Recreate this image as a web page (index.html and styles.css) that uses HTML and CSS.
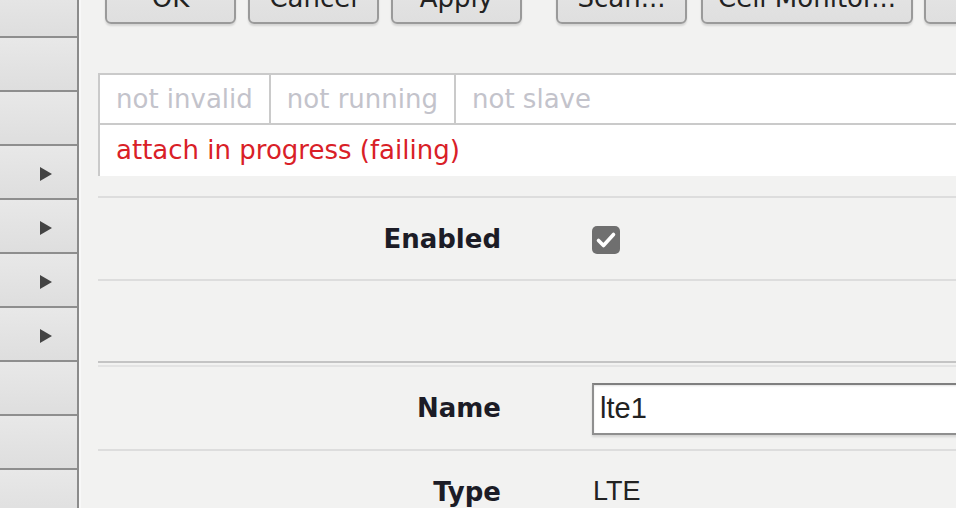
FILE: index.html
```html
<!DOCTYPE html>
<html lang="en">
<head>
<meta charset="utf-8">
<title>Interface &lt;lte1&gt;</title>
<link rel="stylesheet" href="styles.css">
</head>
<body>
<div class="app">
  <nav class="sidebar">
    <div class="nav-item"></div>
    <div class="nav-item"></div>
    <div class="nav-item"></div>
    <div class="nav-item has-sub"><span class="arrow"></span></div>
    <div class="nav-item has-sub"><span class="arrow"></span></div>
    <div class="nav-item has-sub"><span class="arrow"></span></div>
    <div class="nav-item has-sub"><span class="arrow"></span></div>
    <div class="nav-item"></div>
    <div class="nav-item"></div>
    <div class="nav-item"></div>
  </nav>
  <main class="content">
    <div class="toolbar">
      <button class="btn">OK</button>
      <button class="btn">Cancel</button>
      <button class="btn">Apply</button>
      <button class="btn group-start">Scan...</button>
      <button class="btn wide">Cell Monitor...</button>
      <button class="btn last">Info</button>
    </div>

    <div class="status">
      <div class="status-row first">
        <div class="flag">not invalid</div>
        <div class="flag">not running</div>
        <div class="flag fill">not slave</div>
      </div>
      <div class="status-row">
        <div class="flag alert fill">attach in progress (failing)</div>
      </div>
    </div>

    <div class="form">
      <div class="row row-enabled">
        <div class="label">Enabled</div>
        <div class="value">
          <span class="checkbox">
            <svg width="28" height="28" viewBox="0 0 28 28"><path d="M6.5 14.5 L11.5 19.5 L21.5 8.5" fill="none" stroke="#fff" stroke-width="3.6" stroke-linecap="round" stroke-linejoin="round"/></svg>
          </span>
        </div>
      </div>
      <div class="row row-empty"></div>
      <div class="row section-start">
        <div class="label">Name</div>
        <div class="value"><input class="text-input" type="text" value="lte1"></div>
      </div>
      <div class="row">
        <div class="label">Type</div>
        <div class="value plain">LTE</div>
      </div>
    </div>
  </main>
</div>
</body>
</html>
```
FILE: styles.css
```css
html, body {
  margin: 0;
  padding: 0;
  background: #f2f2f1;
  overflow: hidden;
}

body {
  font-family: "DejaVu Sans", Verdana, sans-serif;
  font-size: 26px;
  color: #222;
}

.app {
  display: flex;
  height: 508px;
  overflow: hidden;
}

/* ---------- sidebar ---------- */
.sidebar {
  width: 77px;
  flex: none;
  border-right: 2px solid #8b8b8b;
  display: flex;
  flex-direction: column;
  margin-top: -16px;
  box-shadow: 2px 0 0 #f8f8f8;
}

.nav-item {
  height: 52px;
  flex: none;
  border-bottom: 2px solid #8e8e8e;
  background: linear-gradient(#e8e8e8, #dedede);
  display: flex;
  align-items: center;
  padding-left: 40px;
}

.arrow {
  width: 0;
  height: 0;
  border-top: 7px solid transparent;
  border-bottom: 7px solid transparent;
  border-left: 12px solid #444;
  margin-top: 3px;
}

/* ---------- content ---------- */
.content {
  flex: 1;
  min-width: 0;
  padding-left: 19px;
  overflow: hidden;
}

.toolbar {
  display: flex;
  gap: 12px;
  margin-top: -26px;
  padding-left: 7px;
  white-space: nowrap;
}

.btn {
  flex: none;
  box-sizing: border-box;
  height: 50px;
  min-width: 131px;
  padding: 0 15px 9px;
  display: inline-flex;
  align-items: flex-end;
  justify-content: center;
  font-family: inherit;
  font-size: 26px;
  line-height: 30px;
  color: #222;
  background: linear-gradient(#e6e6e6, #dfdfdf);
  border: 2px solid #9a9a9a;
  border-radius: 6px;
  box-shadow: 0 2px 2px rgba(0, 0, 0, 0.12);
}

.btn.group-start {
  margin-left: 22px;
}

.btn.wide {
  margin-left: 2px;
}

.btn.last {
  margin-left: -1px;
}

/* ---------- status flags ---------- */
.status {
  margin-top: 49px;
  margin-right: -40px;
  border-top: 2px solid #cacaca;
  border-left: 2px solid #cacaca;
  background: #fff;
}

.status-row {
  display: flex;
}

.status-row.first {
  border-bottom: 2px solid #cacaca;
  height: 48px;
}

.flag {
  padding: 0 16px;
  border-right: 2px solid #cacaca;
  line-height: 48px;
  color: #c3c3cb;
  white-space: nowrap;
}

.flag.fill {
  flex: 1;
}

.flag.alert {
  color: #d92027;
  border-right: none;
  line-height: 51px;
}

/* ---------- form ---------- */
.form {
  margin-top: 20px;
  border-top: 2px solid #dddddd;
}

.row {
  display: grid;
  grid-template-columns: 403px 1fr;
  column-gap: 91px;
  align-items: center;
  height: 81px;
  border-bottom: 2px solid #dddddd;
}

.row-empty {
  height: 80px;
  border-bottom-color: #c4c4c4;
}

.section-start {
  margin-top: 2px;
  border-top: 2px solid #e3e3e3;
  height: 82px;
}

.label {
  text-align: right;
  font-weight: bold;
  color: #1c1c26;
}

.value {
  display: flex;
  align-items: center;
}

.value.plain {
  font-family: "Liberation Sans", Arial, sans-serif;
  font-size: 27px;
  color: #222;
  padding-left: 1px;
}

.checkbox {
  width: 28px;
  height: 28px;
  margin-top: 3px;
  border-radius: 5px;
  background: #6f6f6f;
  display: block;
}

.checkbox svg {
  display: block;
}

.text-input {
  box-sizing: border-box;
  width: 420px;
  height: 52px;
  margin: 1px 0 0;
  padding: 0 6px;
  border: 2px solid #8f8f8f;
  border-top-color: #7f7f7f;
  background: #fff;
  box-shadow: inset 0 1px 2px rgba(0, 0, 0, 0.12), 0 2px 2px rgba(0, 0, 0, 0.12);
  font-family: "Liberation Sans", Arial, sans-serif;
  font-size: 29px;
  color: #222;
  outline: none;
}
```
